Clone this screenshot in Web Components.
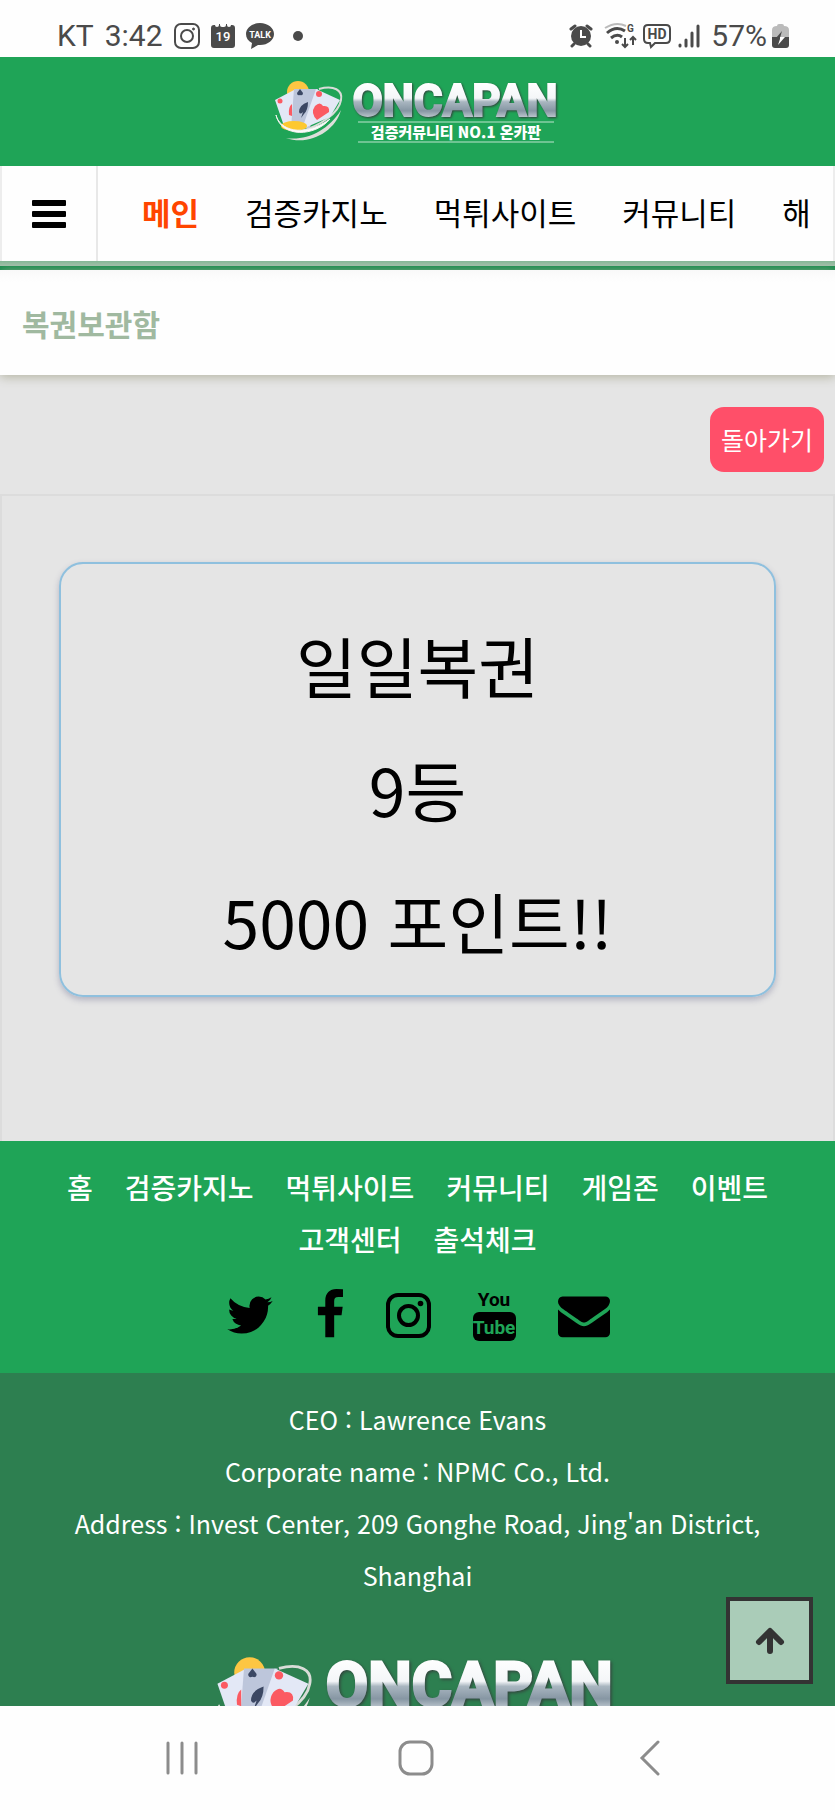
<!DOCTYPE html>
<html lang="ko">
<head>
<meta charset="utf-8">
<meta name="viewport" content="width=device-width, initial-scale=1">
<title>복권보관함</title>
<style>
  html, body { margin: 0; height: 100%; background: #fefefe; }
  body { font-family: "Noto Sans CJK KR", "Noto Sans", sans-serif; color: #000; }
</style>
</head>
<body>
<phone-screen>
  <status-bar slot="top"></status-bar>
  <site-header></site-header>
  <site-nav>
    <nav-item href="#main" current>메인</nav-item>
    <nav-item href="#casino">검증카지노</nav-item>
    <nav-item href="#sites">먹튀사이트</nav-item>
    <nav-item href="#community">커뮤니티</nav-item>
    <nav-item href="#more">해</nav-item>
  </site-nav>
  <page-title>복권보관함</page-title>
  <lottery-panel>
    <span slot="action">돌아가기</span>
    <span slot="name">일일복권</span>
    <span slot="rank">9등</span>
    <span slot="prize">5000 포인트!!</span>
  </lottery-panel>
  <footer-menu></footer-menu>
  <company-info></company-info>
  <to-top slot="overlay"></to-top>
  <system-nav slot="bottom"></system-nav>
</phone-screen>

<script>
const define = (name, html) => {
  const template = document.createElement('template');
  template.innerHTML = html;
  customElements.define(name, class extends HTMLElement {
    constructor() {
      super();
      this.attachShadow({ mode: 'open' }).append(template.content.cloneNode(true));
    }
    connectedCallback() {
      const link = this.shadowRoot.querySelector('a[data-forward]');
      if (link && this.hasAttribute('href')) link.href = this.getAttribute('href');
    }
  });
};

define('phone-screen', `
<style>
  :host { display: flex; flex-direction: column; height: 100vh; background: #fefefe; }
  .view { position: relative; flex: 1; min-height: 0; display: flex; flex-direction: column; }
  .scroll { flex: 1; min-height: 0; overflow: hidden auto; scrollbar-width: none; background: #e5e5e5; }
  .overlay { position: absolute; right: 22px; bottom: 22px; }
</style>
<slot name="top"></slot>
<div class="view">
  <main class="scroll"><slot></slot></main>
  <div class="overlay"><slot name="overlay"></slot></div>
</div>
<slot name="bottom"></slot>`);

define('status-bar', `
<style>
  :host { display: flex; justify-content: space-between; align-items: center; height: 57px; box-sizing: border-box;
    padding: 15px 46px 0 57px; color: #4a4a4a; font: 30px/42px Roboto, sans-serif; }
  div { display: flex; align-items: center; }
  .left { gap: 11px; }
  .right { gap: 5px; }
  svg { display: block; }
  .cal { font: 500 13px Roboto, sans-serif; }
  .talk { font: 700 9px Roboto, sans-serif; }
  .hd { font: 700 14px Roboto, sans-serif; }
  .g { font: 700 10px Roboto, sans-serif; }
</style>
<div class="left">
  <span>KT</span><span>3:42</span>
  <svg width="26" height="26" viewBox="0 0 26 26" fill="none" stroke="#4a4a4a" stroke-width="2"><rect x="1" y="1" width="24" height="24" rx="6"/><circle cx="13" cy="13" r="6"/><circle cx="19.500" cy="6" r="1" fill="#4a4a4a" stroke-width="1"/></svg>
  <svg width="24" height="26" viewBox="0 0 24 26"><path fill="#4a4a4a" d="M0 5q0-3 3-3h1q0 2 2 2t2-2V1h1v1q0 2 2 2h2q2 0 2-2V1h1v1q0 2 2 2t2-2h1q3 0 3 3v17q0 3-3 3H3q-3 0-3-3z"/><text class="cal" x="12" y="18" text-anchor="middle" fill="#fff">19</text></svg>
  <svg width="28" height="28" viewBox="0 0 28 28"><path fill="#4a4a4a" d="M14 1C6 1 0 6 0 12c0 4 2 7 6 9l-1 6 7-4h2c8 0 14-5 14-11S22 1 14 1z"/><text class="talk" x="14" y="16" text-anchor="middle" fill="#fff">TALK</text></svg>
  <svg width="26" height="26" viewBox="0 0 26 26"><circle cx="13" cy="13" r="5" fill="#4a4a4a"/></svg>
</div>
<div class="right">
  <svg width="24" height="24" viewBox="0 0 24 24" fill="none" stroke="#4a4a4a"><circle cx="12" cy="12" r="10" fill="#4a4a4a" stroke="none"/><path stroke-width="3" stroke-linecap="round" d="M2 5l4-3M22 5l-4-3M5 20l-2 2M19 20l2 2"/><path stroke="#fff" stroke-width="2" d="M12 6v7h5"/></svg>
  <svg width="40" height="28" viewBox="0 0 40 28" fill="none" stroke="#4a4a4a" stroke-width="2"><path stroke="#bbb" d="M7 6Q18-1 28 4"/><path stroke-width="3" d="M9 11q9-8 18-2M13 16q6-5 11-1"/><circle cx="19" cy="20" r="2" fill="#4a4a4a" stroke="none"/><path d="M27 16v9m-3-3l3 3 3-3M35 23v-8m-3 3l3-3 3 3"/><text class="g" x="29" y="10" fill="#4a4a4a" stroke="none">G</text></svg>
  <svg width="28" height="26" viewBox="0 0 28 26"><path fill="none" stroke="#4a4a4a" stroke-width="2" d="M5 2h18q4 0 4 4v10q0 4-4 4H12l-4 4-1-4H5q-4 0-4-4V6q0-4 4-4z"/><text class="hd" x="14" y="16" text-anchor="middle" fill="#4a4a4a">HD</text></svg>
  <svg width="30" height="26" viewBox="2 0 30 26" fill="none" stroke="#4a4a4a" stroke-width="3" stroke-linecap="round"><path d="M6 22v1M12 17v6M18 10v13M24 3v20"/></svg>
  <span>57%</span>
  <svg width="17" height="26" viewBox="0 0 17 26"><path fill="#bbb" d="M5 3q0-2 2-2h3q2 0 2 2 5 0 5 4v8H0V7q0-4 5-4z"/><path fill="#4a4a4a" d="M0 14h17v8q0 3-3 3H3q-3 0-3-3z"/><path fill="#4a4a4a" d="M10 8l-6 7h4z"/><path fill="#fff" d="M8 14h5l-7 8 2-6z"/></svg>
</div>`);

define('brand-logo', `
<style>
  :host { display: block; width: 288px; }
  svg { display: block; width: 100%; height: auto; overflow: visible; }
  .word { font: 700 44px Roboto, sans-serif; filter: drop-shadow(1px 1px 1px #33443d); }
  .tag { font: 900 15px "Noto Sans CJK KR", sans-serif; }
</style>
<svg viewBox="0 0 288 66" role="img" aria-label="ONCAPAN">
  <defs><linearGradient id="steel" gradientUnits="userSpaceOnUse" x1="0" y1="4" x2="0" y2="40">
    <stop offset="0" stop-color="#fff"/><stop offset="0.450" stop-color="#f4f6f8"/><stop offset="0.550" stop-color="#a9b6c0"/><stop offset="0.800" stop-color="#8696a3"/><stop offset="1" stop-color="#c3ccd3"/>
  </linearGradient></defs>
  <circle cx="24" cy="14" r="11" fill="#fdc643"/>
  <path d="M45 11C60 7 69 12 67 22C65 35 46 48 27 53" fill="none" stroke="#d9dcd8" stroke-width="2"/>
  <path d="M1 22L20 12L30 47L10 48z" fill="#e3e8f6"/>
  <path d="M20 11H44L36 50H17z" fill="#bdc6db"/>
  <path d="M42 11L66 22L56 39L28 51z" fill="#e3e8f6"/>
  <circle cx="6" cy="23" r="2.500" fill="#fb5a62"/><circle cx="45" cy="16" r="3" fill="#fb5a62"/>
  <path d="M26 11l3 4q0 3-3 2-3 1-3-2z" fill="#3b4763"/>
  <path d="M18 26q-4 3-3 11l3 1z" fill="#fb5a62"/>
  <path d="M34 24q-9 3-9 10 1 3 4 0l-2 6 3-4q4-4 4-12z" fill="#3b4763"/>
  <path d="M41 28q5-5 8 0 7-1 6 6l-12 8q-7-7-2-14z" fill="#fb5a62"/>
  <ellipse cx="20" cy="48" rx="13" ry="5" fill="#fdc830"/>
  <path d="M2 37C5 51 28 61 56 41C41 59 7 60 2 37z" fill="#fff" stroke="#f2f2f0"/>
  <path d="M12 60C32 63 54 53 67 32C61 54 35 68 12 60z" fill="#dedfdb"/>
  <text class="word" x="181" y="38" text-anchor="middle" fill="url(#steel)" stroke="url(#steel)" stroke-width="2">ONCAPAN</text>
  <path d="M84 44H280M84 64H280" stroke="#fff" opacity="0.700"/>
  <text class="tag" x="182" y="60" text-anchor="middle" fill="#fff">검증커뮤니티 NO.1 온카판</text>
</svg>`);

define('site-header', `
<style>
  :host { display: block; background: #1fa457; }
  header { display: flex; justify-content: center; padding: 21px 0 22px; }
</style>
<header><a href="#home"><brand-logo></brand-logo></a></header>`);

define('nav-item', `
<style>
  :host { display: block; }
  a { color: #000; text-decoration: none; font-size: 31px; line-height: 92px; white-space: nowrap; }
  :host([current]) a { color: #ff4500; font-weight: 700; }
</style>
<a data-forward href="#"><slot></slot></a>`);

define('site-nav', `
<style>
  :host { display: block; background: #fefefe; border-bottom: 4px solid #148a49; }
  nav { display: flex; border: solid #ededed; border-width: 0 2px; }
  button { display: grid; place-items: center; width: 96px; padding: 0; border: 0; border-right: 2px solid #e8e8e8; background: none; }
  .items { flex: 1; min-width: 0; display: flex; gap: 46px; padding: 0 0 3px 44px; overflow: hidden; }
  .strip { height: 5px; background: linear-gradient(#84b795, #a2bfaa); }
</style>
<nav>
  <button type="button" aria-label="메뉴"><svg width="34" height="28" viewBox="0 0 34 28"><rect width="34" height="6" rx="1"/><rect y="11" width="34" height="6" rx="1"/><rect y="22" width="34" height="6" rx="1"/></svg></button>
  <div class="items"><slot></slot></div>
</nav>
<div class="strip"></div>`);

define('page-title', `
<style>
  :host { display: block; position: relative; background: linear-gradient(#f9f9f9, #fefefe 12px); box-shadow: 0 2px 10px #b4b4a2; }
  h1 { margin: 0; padding: 29px 22px 28px; font-size: 30px; line-height: 48px; font-weight: 700; color: #a0b9a0; }
</style>
<h1><slot></slot></h1>`);

define('lottery-panel', `
<style>
  :host { display: block; }
  .bar { display: flex; justify-content: flex-end; padding: 32px 11px 22px; }
  button { height: 65px; padding: 0 11px 2px; border: 0; border-radius: 14px; background: #ff4f69; color: #fff; font: inherit; font-size: 25px; }
  .panel { border: 2px solid #dcdcdc; border-bottom: 0; padding: 66px 57px 144px; }
  .card { border: 2px solid #8fc0de; border-radius: 24px; box-shadow: 0 3px 6px #b4b4c2; padding: 41px 0 7px; text-align: center; }
  p, h2 { margin: 0; font-weight: 400; font-size: 66px; line-height: 128px; }
  h2 { line-height: 119px; }
  .prize { line-height: 136px; }
</style>
<div class="bar"><button type="button"><slot name="action"></slot></button></div>
<section class="panel"><div class="card">
  <h2><slot name="name"></slot></h2>
  <p><slot name="rank"></slot></p>
  <p class="prize"><slot name="prize"></slot></p>
</div></section>`);

define('footer-menu', `
<style>
  :host { display: block; background: #1fa457; }
  nav { display: flex; flex-wrap: wrap; justify-content: center; padding: 20px 60px 0; column-gap: 32px; }
  nav a { color: #fff; text-decoration: none; font-size: 28px; font-weight: 500; line-height: 52px; white-space: nowrap; }
  .social { display: flex; justify-content: center; gap: 41px; padding: 24px 0 32px; }
  .social a, svg { display: block; }
  .you { font: 700 19px Roboto, sans-serif; }
</style>
<nav>
  <a href="#home">홈</a><a href="#casino">검증카지노</a><a href="#sites">먹튀사이트</a><a href="#community">커뮤니티</a><a href="#games">게임존</a><a href="#events">이벤트</a><a href="#support">고객센터</a><a href="#attendance">출석체크</a>
</nav>
<div class="social">
  <a href="#twitter" aria-label="Twitter"><svg width="48" height="52" viewBox="64 0 1664 1792"><path d="M1684 408q-67 98-162 167 1 14 1 42 0 130-38 259.500t-115.500 248.500-184.500 210.500-258 146-323 54.500q-271 0-496-145 35 4 78 4 225 0 401-138-105-2-188-64.500t-114-159.500q33 5 61 5 43 0 85-11-112-23-185.500-111.500t-73.500-205.500v-4q68 38 146 41-66-44-105-115t-39-154q0-88 44-163 121 149 294.500 238.500t371.500 99.500q-8-38-8-74 0-134 94.500-228.500t228.500-94.500q140 0 236 102 109-21 205-78-37 115-142 178 93-10 186-50z"/></svg></a>
  <a href="#facebook" aria-label="Facebook"><svg width="30" height="52" viewBox="384 0 1024 1792"><path d="M1343 12v264h-157q-86 0-116 36t-30 108v189h293l-39 296h-254v759h-306v-759h-255v-296h255v-218q0-186 104-288.500t277-102.500q147 0 228 12z"/></svg></a>
  <a href="#instagram" aria-label="Instagram"><svg width="45" height="52" viewBox="0 0 45 52" fill="none" stroke="#000" stroke-width="4"><rect x="2" y="6" width="41" height="41" rx="10"/><circle cx="22.500" cy="26.500" r="9.500"/><circle cx="34.500" cy="14.500" r="2.800" fill="#000" stroke="none"/></svg></a>
  <a href="#youtube" aria-label="YouTube"><svg width="45" height="52" viewBox="0 0 45 52"><text class="you" x="22" y="17" text-anchor="middle">You</text><rect x="1" y="23" width="43" height="29" rx="6"/><text class="you" x="22" y="45" text-anchor="middle" fill="#1fa457">Tube</text></svg></a>
  <a href="#mail" aria-label="Mail"><svg width="52" height="52" viewBox="0 0 1792 1792"><path d="M1792 710v794q0 66-47 113t-113 47h-1472q-66 0-113-47t-47-113v-794q44 49 101 87 362 246 497 345 57 42 92.500 65.500t94.500 48 110 24.500h2q51 0 110-24.500t94.500-48 92.500-65.500q170-123 498-345 57-39 100-87zm0-294q0 79-49 151t-122 123q-376 261-468 325-10 7-42.500 31t-54 38.500-52 32.500-57.500 27-50 9h-2q-23 0-50-9t-57.500-27-52-32.500-54-38.500-42.500-31q-91-64-262-182.500t-205-142.500q-62-42-117-115.500t-55-136.500q0-78 41.500-130t118.500-52h1472q65 0 112.500 47t47.500 113z"/></svg></a>
</div>`);

define('company-info', `
<style>
  :host { display: block; background: #2d7f50; color: #fff; }
  footer { padding: 20px 60px 40px; text-align: center; }
  p { margin: 0; font-size: 25px; line-height: 52px; }
  brand-logo { width: 403px; margin: 52px auto 0; }
</style>
<footer>
  <p>CEO : Lawrence Evans</p>
  <p>Corporate name : NPMC Co., Ltd.</p>
  <p>Address : Invest Center, 209 Gonghe Road, Jing'an District, Shanghai</p>
  <brand-logo></brand-logo>
</footer>`);

define('to-top', `
<style>
  :host { display: block; }
  button { display: grid; place-items: center; width: 87px; height: 87px; padding: 0; border: 4px solid #333; background: #aaccb8; }
</style>
<button type="button" aria-label="맨 위로"><svg width="30" height="28" viewBox="0 0 30 28" fill="none" stroke="#333" stroke-width="6" stroke-linecap="round" stroke-linejoin="round"><path d="M15 24V5M4 15L15 4L26 15"/></svg></button>`);

define('system-nav', `
<style>
  :host { display: flex; justify-content: space-between; align-items: center; height: 104px; padding: 0 155px 0 152px; background: #fefefe; }
  button { display: grid; place-items: center; width: 60px; height: 60px; padding: 0; border: 0; background: none; }
  svg { fill: none; stroke: #8c8c8c; stroke-width: 3; stroke-linecap: round; }
</style>
<button type="button" aria-label="최근 앱"><svg width="34" height="36" viewBox="0 0 34 36"><path d="M3 3V33M17 3V33M31 3V33"/></svg></button>
<button type="button" aria-label="홈"><svg width="36" height="36" viewBox="0 0 36 36"><rect x="2" y="2" width="32" height="32" rx="10"/></svg></button>
<button type="button" aria-label="뒤로"><svg width="22" height="36" viewBox="0 0 22 36"><path d="M19 2L3 18L19 34"/></svg></button>`);
</script>
</body>
</html>
